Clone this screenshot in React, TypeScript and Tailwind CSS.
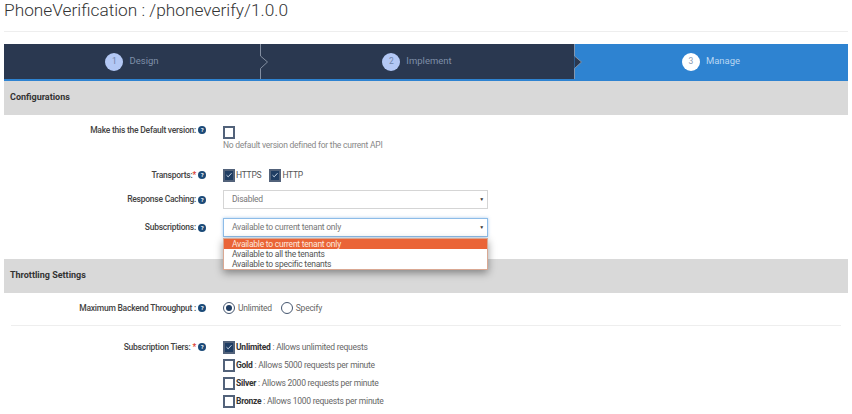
const FONT = "font-['Roboto','Liberation_Sans',sans-serif]";

function HelpIcon() {
  return (
    <span className="ml-[2px] inline-flex h-[8px] w-[8px] shrink-0 items-center justify-center rounded-full bg-[#1b4a78] text-[6px] font-bold leading-none text-white">
      ?
    </span>
  );
}

function Checkbox({ checked }: { checked?: boolean }) {
  return (
    <span
      className={`inline-flex h-[13px] w-[12px] shrink-0 items-center justify-center border-2 border-[#52627a] ${
        checked ? "bg-[#1f3d63]" : "bg-white"
      }`}
    >
      {checked && (
        <svg width="8" height="8" viewBox="0 0 8 8" fill="none">
          <path d="M1.5 4.2 L3.2 5.8 L6.5 2.2" stroke="#c9d6e6" strokeWidth="1" />
        </svg>
      )}
    </span>
  );
}

function Radio({ checked }: { checked?: boolean }) {
  return (
    <span className="inline-flex h-[12px] w-[12px] shrink-0 items-center justify-center rounded-full border border-[#45566f] bg-white">
      {checked && <span className="h-[6px] w-[6px] rounded-full bg-[#1f3d63]" />}
    </span>
  );
}

function Label({ text, required, spaced }: { text: string; required?: boolean; spaced?: boolean }) {
  return (
    <div className="flex w-[202px] shrink-0 items-center justify-end text-[8.5px] font-medium tracking-[-0.24px] text-[#444]">
      <span>{text}</span>
      {required && <span className={`${spaced ? "ml-[2px]" : ""} text-[#d9362b]`}>*</span>}
      <HelpIcon />
    </div>
  );
}

function Select({ value, focused }: { value: string; focused?: boolean }) {
  return (
    <div
      className={`flex h-[19px] w-[265px] items-center justify-between border pl-[8px] pr-[3px] text-[8.5px] tracking-[-0.24px] text-[#777] ${
        focused ? "border-[#8dbce8] shadow-[0_0_3px_rgba(80,150,220,0.5)]" : "border-[#d5d5d5]"
      }`}
    >
      <span>{value}</span>
      <span className="text-[5px] text-[#333]">▼</span>
    </div>
  );
}

function Step({ n, label, width, active }: { n: number; label: string; width: string; active?: boolean }) {
  return (
    <div
      className={`flex h-full items-center justify-center gap-[6px] ${width} ${
        active ? "bg-[#2e83d1] text-[#b9d6f2]" : "bg-[#2a3850] text-[#7f8fa8]"
      }`}
    >
      <span
        className={`flex h-[18px] w-[18px] items-center justify-center rounded-full text-[8.5px] ${
          active ? "bg-white text-[#8a9ab0]" : "bg-[#b3c8f5] text-[#6f84a8]"
        }`}
      >
        {n}
      </span>
      <span className="text-[9.5px]">{label}</span>
    </div>
  );
}

function Chevron({ left }: { left: string }) {
  return (
    <svg className={`absolute top-0 ${left}`} width="9" height="35" viewBox="0 0 9 35">
      <path d="M0.5 0 V12 L7.5 18 L0.5 24.5 V35" fill="#2a3850" stroke="#8d99aa" strokeWidth="0.9" />
    </svg>
  );
}

function SectionHeader({ title, className }: { title: string; className?: string }) {
  return (
    <div className={`flex h-[34px] items-center bg-[#d9d9d9] pl-[6px] text-[9px] font-bold text-[#333] ${className ?? ""}`}>
      {title}
    </div>
  );
}

function Tier({ name, desc }: { name: string; desc: string }) {
  return (
    <div className="flex h-[18px] items-center text-[8.5px] tracking-[-0.24px] text-[#666]">
      <Checkbox checked={name === "Unlimited"} />
      <span className="ml-[1px] font-bold text-[#333]">{name}</span>
      <span>&nbsp;: {desc}</span>
    </div>
  );
}

export default function App() {
  return (
    <div className={`${FONT} h-[414px] w-[852px] overflow-hidden bg-white px-[4px]`}>
      <h1 className="h-[31px] text-[17.3px] font-light leading-[21px] text-[#333]">
        PhoneVerification : /phoneverify/1.0.0
      </h1>
      <div className="border-t border-[#eee]" />

      <div className="relative mt-[12px] flex h-[37px] w-[844px] border-b-2 border-[#2e83d1]">
        <Step n={1} label="Design" width="w-[256px]" />
        <Step n={2} label="Implement" width="w-[314px]" />
        <Step n={3} label="Manage" width="w-[274px]" active />
        <Chevron left="left-[256px]" />
        <Chevron left="left-[570px]" />
      </div>

      <SectionHeader title="Configurations" />

      <div className="flex pt-[11px]">
        <div className="mt-[-2px] h-[14px]">
          <Label text="Make this the Default version:" />
        </div>
        <div className="ml-[17px] flex flex-col items-start">
          <Checkbox />
          <p className="text-[8.5px] leading-[12px] tracking-[-0.24px] text-[#888]">No default version defined for the current API</p>
        </div>
      </div>

      <div className="mt-[17px] flex h-[14px] items-center">
        <Label text="Transports:" required />
        <div className="ml-[17px] flex items-center text-[8.5px] tracking-[-0.24px] text-[#555]">
          <Checkbox checked />
          <span className="ml-[1px]">HTTPS</span>
          <span className="ml-[8px] flex items-center">
            <Checkbox checked />
            <span className="ml-[1px]">HTTP</span>
          </span>
        </div>
      </div>

      <div className="mt-[8px] flex items-center">
        <Label text="Response Caching:" />
        <div className="ml-[17px]">
          <Select value="Disabled" />
        </div>
      </div>

      <div className="mt-[9px] flex items-center">
        <Label text="Subscriptions:" />
        <div className="relative z-10 ml-[17px]">
          <Select value="Available to current tenant only" focused />
          <div className="absolute left-0 top-[20px] w-[265px] border border-[#d9a893] bg-white text-[8.5px] leading-[10px] tracking-[-0.24px] text-[#555] shadow-[0_3px_8px_rgba(0,0,0,0.4)]">
            <div className="h-[10px] bg-[#ea6437] pl-[8px] text-[#fde8df]">Available to current tenant only</div>
            <div className="pl-[8px]">Available to all the tenants</div>
            <div className="pl-[8px]">Available to specific tenants</div>
          </div>
        </div>
      </div>

      <SectionHeader title="Throttling Settings" className="mt-[22px]" />

      <div className="mt-[9px] flex h-[12px] items-center">
        <Label text="Maximum Backend Throughput :" />
        <div className="ml-[17px] flex items-center gap-[3px] text-[8.5px] tracking-[-0.24px] text-[#666]">
          <Radio checked />
          <span>Unlimited</span>
          <span className="ml-[6px] flex">
            <Radio />
          </span>
          <span>Specify</span>
        </div>
      </div>

      <div className="mx-[7px] mt-[11px] border-t border-[#eee]" />

      <div className="mt-[12px] flex">
        <div className="flex h-[18px]">
          <Label text="Subscription Tiers:" required spaced />
        </div>
        <div className="ml-[17px]">
          <Tier name="Unlimited" desc="Allows unlimited requests" />
          <Tier name="Gold" desc="Allows 5000 requests per minute" />
          <Tier name="Silver" desc="Allows 2000 requests per minute" />
          <Tier name="Bronze" desc="Allows 1000 requests per minute" />
        </div>
      </div>
    </div>
  );
}
